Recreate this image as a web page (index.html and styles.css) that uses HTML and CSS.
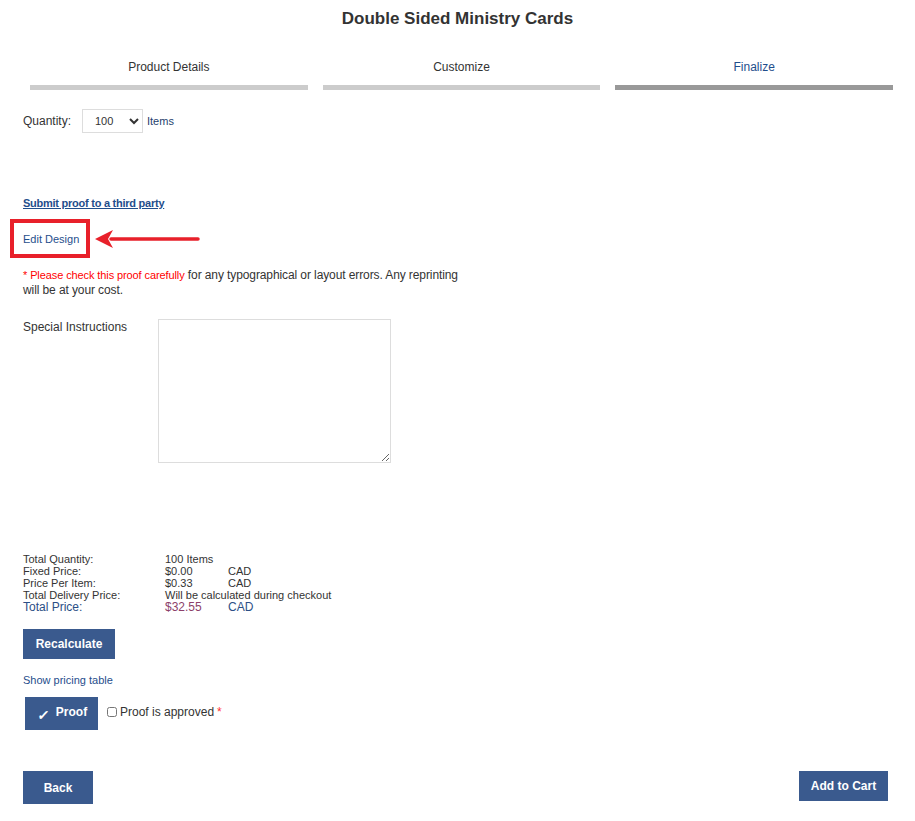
FILE: index.html
```html
<!DOCTYPE html>
<html>
<head>
<meta charset="utf-8">
<link rel="stylesheet" href="styles.css">
</head>
<body>
<div class="page">
  <h1 class="title">Double Sided Ministry Cards</h1>
  <div class="steps">
    <div class="step"><span class="step-label">Product Details</span><span class="step-bar"></span></div>
    <div class="step"><span class="step-label">Customize</span><span class="step-bar"></span></div>
    <div class="step active"><span class="step-label">Finalize</span><span class="step-bar"></span></div>
  </div>

  <div class="content">
    <div class="qty-row">
      <span class="qty-label">Quantity:</span>
      <select class="qty-select"><option>100</option></select>
      <span class="qty-items">Items</span>
    </div>

    <a class="third-party" href="#">Submit proof to a third party</a>

    <div class="edit-row">
      <div class="edit-box"><a class="edit-link" href="#">Edit Design</a></div>
      <svg class="arrow" width="106" height="18" viewBox="0 0 106 18">
        <line x1="16" y1="9" x2="103" y2="9" stroke="#e8202a" stroke-width="3.5" stroke-linecap="round"/>
        <path d="M0 9 L18 0 L13 9 L18 18 Z" fill="#e8202a"/>
      </svg>
    </div>

    <p class="warning"><span class="warn-red">* Please check this proof carefully</span> for any typographical or layout errors. Any reprinting will be at your cost.</p>

    <div class="instr-row">
      <label class="instr-label">Special Instructions</label>
      <textarea class="instr-box"></textarea>
    </div>

    <div class="pricing">
      <div class="prow"><span class="pl">Total Quantity:</span><span class="pv">100 Items</span></div>
      <div class="prow"><span class="pl">Fixed Price:</span><span class="pv">$0.00</span><span class="pc">CAD</span></div>
      <div class="prow"><span class="pl">Price Per Item:</span><span class="pv">$0.33</span><span class="pc">CAD</span></div>
      <div class="prow"><span class="pl">Total Delivery Price:</span><span class="pv">Will be calculated during checkout</span></div>
      <div class="prow total"><span class="pl">Total Price:</span><span class="pv price">$32.55</span><span class="pc">CAD</span></div>
    </div>

    <button class="btn recalc">Recalculate</button>

    <a class="pricing-link" href="#">Show pricing table</a>

    <div class="proof-row">
      <button class="btn proof"><span class="check">&#10003;</span>Proof</button>
      <label class="approve"><input type="checkbox" class="approve-box">Proof is approved <span class="req">*</span></label>
    </div>

    <div class="nav-row">
      <button class="btn back">Back</button>
      <button class="btn cart">Add to Cart</button>
    </div>
  </div>
</div>
</body>
</html>
```

FILE: styles.css
```css
html, body {
  margin: 0;
  padding: 0;
  background: #fff;
}
body {
  font-family: "Liberation Sans", Arial, sans-serif;
  color: #333;
}
.page {
  width: 915px;
}
.title {
  margin: 0;
  padding-top: 9px;
  text-align: center;
  font-size: 17px;
  font-weight: bold;
  color: #333;
  line-height: 20px;
}
.steps {
  display: flex;
  gap: 15px;
  padding: 0 22px 0 30px;
  margin-top: 31px;
}
.step {
  flex: 1;
  display: flex;
  flex-direction: column;
  align-items: center;
}
.step-label {
  font-size: 12px;
  line-height: 14px;
  color: #333;
}
.step-bar {
  display: block;
  width: 100%;
  height: 5px;
  margin-top: 11px;
  background: #cccccc;
}
.step.active .step-label {
  color: #1f4e8c;
}
.step.active .step-bar {
  background: #999999;
}
.content {
  padding: 0 27px 0 23px;
}
.qty-row {
  display: flex;
  align-items: center;
  margin-top: 19px;
  font-size: 12px;
}
.qty-label {
  width: 59px;
}
.qty-select {
  width: 61px;
  height: 24px;
  border: 1px solid #ddd;
  border-radius: 0;
  background: #fff;
  font-family: "Liberation Sans", Arial, sans-serif;
  font-size: 11px;
  color: #333;
  padding-left: 8px;
}
.qty-items {
  margin-left: 4px;
  font-size: 11px;
  color: #1f3f6e;
}
.third-party {
  display: block;
  margin-top: 63px;
  font-size: 11px;
  font-weight: bold;
  letter-spacing: -0.25px;
  color: #1f4e8c;
  text-decoration: underline;
  line-height: 14px;
}
.edit-row {
  display: flex;
  align-items: center;
  margin-top: 9px;
  margin-left: -13px;
}
.edit-box {
  width: 63px;
  height: 30px;
  border: 4px solid #e8202a;
  display: flex;
  align-items: center;
  padding-left: 9px;
  padding-top: 1px;
  box-sizing: content-box;
}
.edit-link {
  font-size: 11px;
  color: #1f4e8c;
  text-decoration: none;
}
.arrow {
  margin-left: 5px;
}
.warning {
  margin: 10px 0 0 0;
  width: 445px;
  font-size: 12px;
  line-height: 15px;
  letter-spacing: -0.1px;
  color: #333;
}
.warn-red {
  color: #f00;
  font-size: 11px;
}
.instr-row {
  display: flex;
  align-items: flex-start;
  margin-top: 21px;
}
.instr-label {
  width: 135px;
  font-size: 12px;
  padding-top: 1px;
  line-height: 14px;
}
.instr-box {
  width: 227px;
  height: 138px;
  border: 1px solid #ddd;
  margin: 0;
  padding: 2px;
  resize: both;
}
.pricing {
  margin-top: 90px;
  font-size: 11px;
  line-height: 12px;
  color: #333;
}
.prow {
  display: flex;
}
.pl {
  width: 142px;
}
.pv {
  width: 63px;
}
.prow:nth-child(4) .pv {
  width: auto;
}
.prow.total {
  font-size: 12px;
  color: #2b4f86;
}
.prow.total .price {
  color: #8c3f6a;
}
.btn {
  border: none;
  background: #3a5a8e;
  color: #fff;
  font-family: "Liberation Sans", Arial, sans-serif;
  font-weight: bold;
  font-size: 12px;
  cursor: pointer;
}
.recalc {
  display: block;
  margin-top: 16px;
  width: 92px;
  height: 30px;
}
.pricing-link {
  display: block;
  margin-top: 15px;
  font-size: 11px;
  color: #1f4e8c;
  text-decoration: none;
  line-height: 12px;
}
.proof-row {
  display: flex;
  align-items: center;
  margin-top: 11px;
  margin-left: 2px;
}
.proof {
  width: 73px;
  height: 33px;
  padding: 0 0 3px 2px;
  display: flex;
  align-items: center;
  justify-content: center;
}
.check {
  font-size: 14px;
  font-weight: bold;
  margin-right: 6px;
  margin-top: 5px;
  display: inline-block;
  transform: skewX(-8deg);
}
.approve {
  display: flex;
  align-items: center;
  margin-left: 8px;
  font-size: 12px;
  color: #333;
  margin-bottom: 3px;
}
.approve-box {
  margin: 0 3px 0 1px;
  width: 10px;
  height: 10px;
}
.req {
  color: #f33;
  margin-left: 3px;
}
.nav-row {
  display: flex;
  justify-content: space-between;
  align-items: flex-start;
  margin-top: 41px;
}
.back {
  width: 70px;
  height: 33px;
}
.cart {
  width: 89px;
  height: 30px;
}
```
